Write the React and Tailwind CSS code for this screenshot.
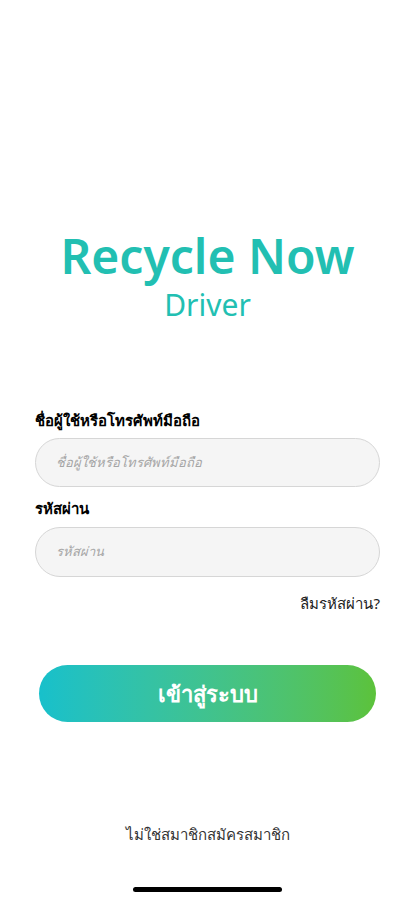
import React from 'react';

export default function App() {
  return (
    <div className="relative flex min-h-[900px] w-full flex-col bg-white font-['Noto_Sans',sans-serif] text-black">
      {/* Title */}
      <div className="mt-[228px] flex flex-col items-center text-[#22bfb2]">
        <h1 className="text-[48px] font-semibold leading-[56px]">Recycle Now</h1>
        <p className="mt-[2px] text-[30px] leading-[38px]">Driver</p>
      </div>

      {/* Form */}
      <div className="mt-[85px] flex flex-col px-[35px]">
        <label className="mb-[7px] text-[15px] font-semibold leading-[22px]">ชื่อผู้ใช้หรือโทรศัพท์มือถือ</label>
        <div className="flex h-[49px] items-center rounded-[25px] border border-[#d6d6d6] bg-[#f5f5f5] px-[20px]">
          <span className="text-[13px] italic text-[#a5a5a5]">ชื่อผู้ใช้หรือโทรศัพท์มือถือ</span>
        </div>

        <label className="mb-[8px] mt-[10px] text-[15px] font-semibold leading-[22px]">รหัสผ่าน</label>
        <div className="flex h-[50px] items-center rounded-[25px] border border-[#d6d6d6] bg-[#f5f5f5] px-[20px]">
          <span className="text-[13px] italic text-[#a5a5a5]">รหัสผ่าน</span>
        </div>

        <div className="mt-[16px] flex justify-end">
          <span className="text-[15px] leading-[20px] text-[#222]">ลืมรหัสผ่าน?</span>
        </div>

        <button className="mx-[4px] mt-[52px] flex h-[57px] items-center justify-center rounded-full bg-gradient-to-r from-[#17c0cb] to-[#5cc23a] text-[22px] font-semibold text-white">
          เข้าสู่ระบบ
        </button>
      </div>

      {/* Footer */}
      <div className="mt-auto flex flex-col items-center">
        <span className="text-[15px] leading-[22px] text-[#333]">ไม่ใช่สมาชิกสมัครสมาชิก</span>
        <div className="mb-[8px] mt-[42px] h-[5px] w-[149px] rounded-full bg-black" />
      </div>
    </div>
  );
}
